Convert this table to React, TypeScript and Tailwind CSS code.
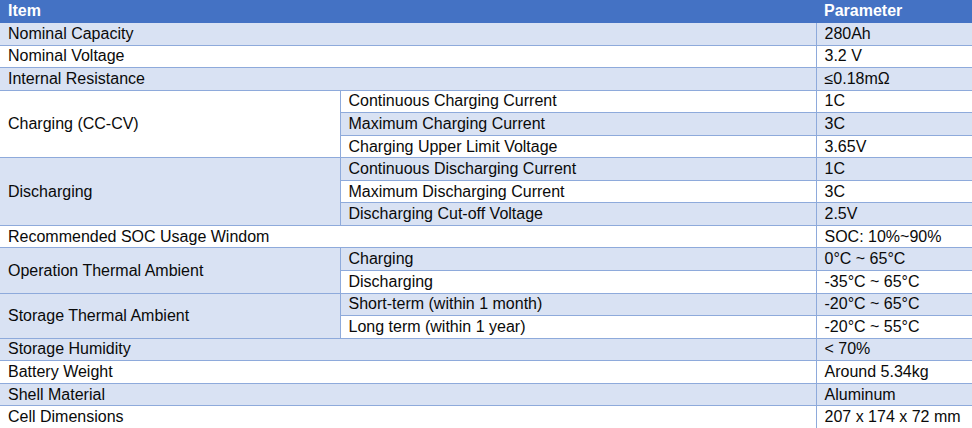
import React from "react";

type Cell = { text: string; light: boolean; colSpan?: number; rowSpan?: number };
type Row = Cell[];

const L = true;
const W = false;

const rows: Row[] = [
  [{ text: "Nominal Capacity", light: L, colSpan: 2 }, { text: "280Ah", light: L }],
  [{ text: "Nominal Voltage", light: W, colSpan: 2 }, { text: "3.2 V", light: W }],
  [{ text: "Internal Resistance", light: L, colSpan: 2 }, { text: "≤0.18mΩ", light: L }],
  [
    { text: "Charging (CC-CV)", light: W, rowSpan: 3 },
    { text: "Continuous Charging Current", light: W },
    { text: "1C", light: W },
  ],
  [{ text: "Maximum Charging Current", light: L }, { text: "3C", light: L }],
  [{ text: "Charging Upper Limit Voltage", light: W }, { text: "3.65V", light: W }],
  [
    { text: "Discharging", light: L, rowSpan: 3 },
    { text: "Continuous Discharging Current", light: L },
    { text: "1C", light: L },
  ],
  [{ text: "Maximum Discharging Current", light: W }, { text: "3C", light: W }],
  [{ text: "Discharging Cut-off Voltage", light: L }, { text: "2.5V", light: L }],
  [{ text: "Recommended SOC Usage Windom", light: W, colSpan: 2 }, { text: "SOC: 10%~90%", light: W }],
  [
    { text: "Operation Thermal Ambient", light: L, rowSpan: 2 },
    { text: "Charging", light: L },
    { text: "0°C ~ 65°C", light: L },
  ],
  [{ text: "Discharging", light: W }, { text: "-35°C ~ 65°C", light: W }],
  [
    { text: "Storage Thermal Ambient", light: L, rowSpan: 2 },
    { text: "Short-term (within 1 month)", light: L },
    { text: "-20°C ~ 65°C", light: L },
  ],
  [{ text: "Long term (within 1 year)", light: W }, { text: "-20°C ~ 55°C", light: W }],
  [{ text: "Storage Humidity", light: L, colSpan: 2 }, { text: "< 70%", light: L }],
  [{ text: "Battery Weight", light: W, colSpan: 2 }, { text: "Around 5.34kg", light: W }],
  [{ text: "Shell Material", light: L, colSpan: 2 }, { text: "Aluminum", light: L }],
  [{ text: "Cell Dimensions", light: W, colSpan: 2 }, { text: "207 x 174 x 72 mm", light: W }],
];

const startsWithFirstCol = [true, true, true, true, false, false, true, false, false, true, true, false, true, false, true, true, true, true];

export default function App() {
  return (
    <div
      className="w-[972px] h-[428px] overflow-hidden bg-white text-[16px] leading-none text-[#0a0a0a]"
      style={{ fontFamily: '"Liberation Sans", Arial, sans-serif' }}
    >
      <table className="w-[972px] table-fixed border-collapse">
        <colgroup>
          <col className="w-[340px]" />
          <col className="w-[476px]" />
          <col className="w-[156px]" />
        </colgroup>
        <thead>
          <tr className="h-[22.5px] bg-[#4472c4] text-white font-bold">
            <th colSpan={2} className="text-left font-bold pl-[8px] py-0">
              Item
            </th>
            <th className="text-left font-bold pl-[8px] py-0">Parameter</th>
          </tr>
        </thead>
        <tbody>
          {rows.map((row, ri) => (
            <tr key={ri} className="h-[22.56px]">
              {row.map((c, ci) => {
                const isFirstCol = ci === 0 && startsWithFirstCol[ri];
                return (
                  <td
                    key={ci}
                    colSpan={c.colSpan}
                    rowSpan={c.rowSpan}
                    className={[
                      "py-0 pl-[8px] pr-1 align-middle whitespace-nowrap",
                      c.light ? "bg-[#d9e2f3]" : "bg-white",
                      ri === 0 ? "" : "border-t border-[#8eaadb]",
                      isFirstCol ? "" : "border-l border-[#8eaadb]",
                    ].join(" ")}
                  >
                    {c.text}
                  </td>
                );
              })}
            </tr>
          ))}
        </tbody>
      </table>
    </div>
  );
}
